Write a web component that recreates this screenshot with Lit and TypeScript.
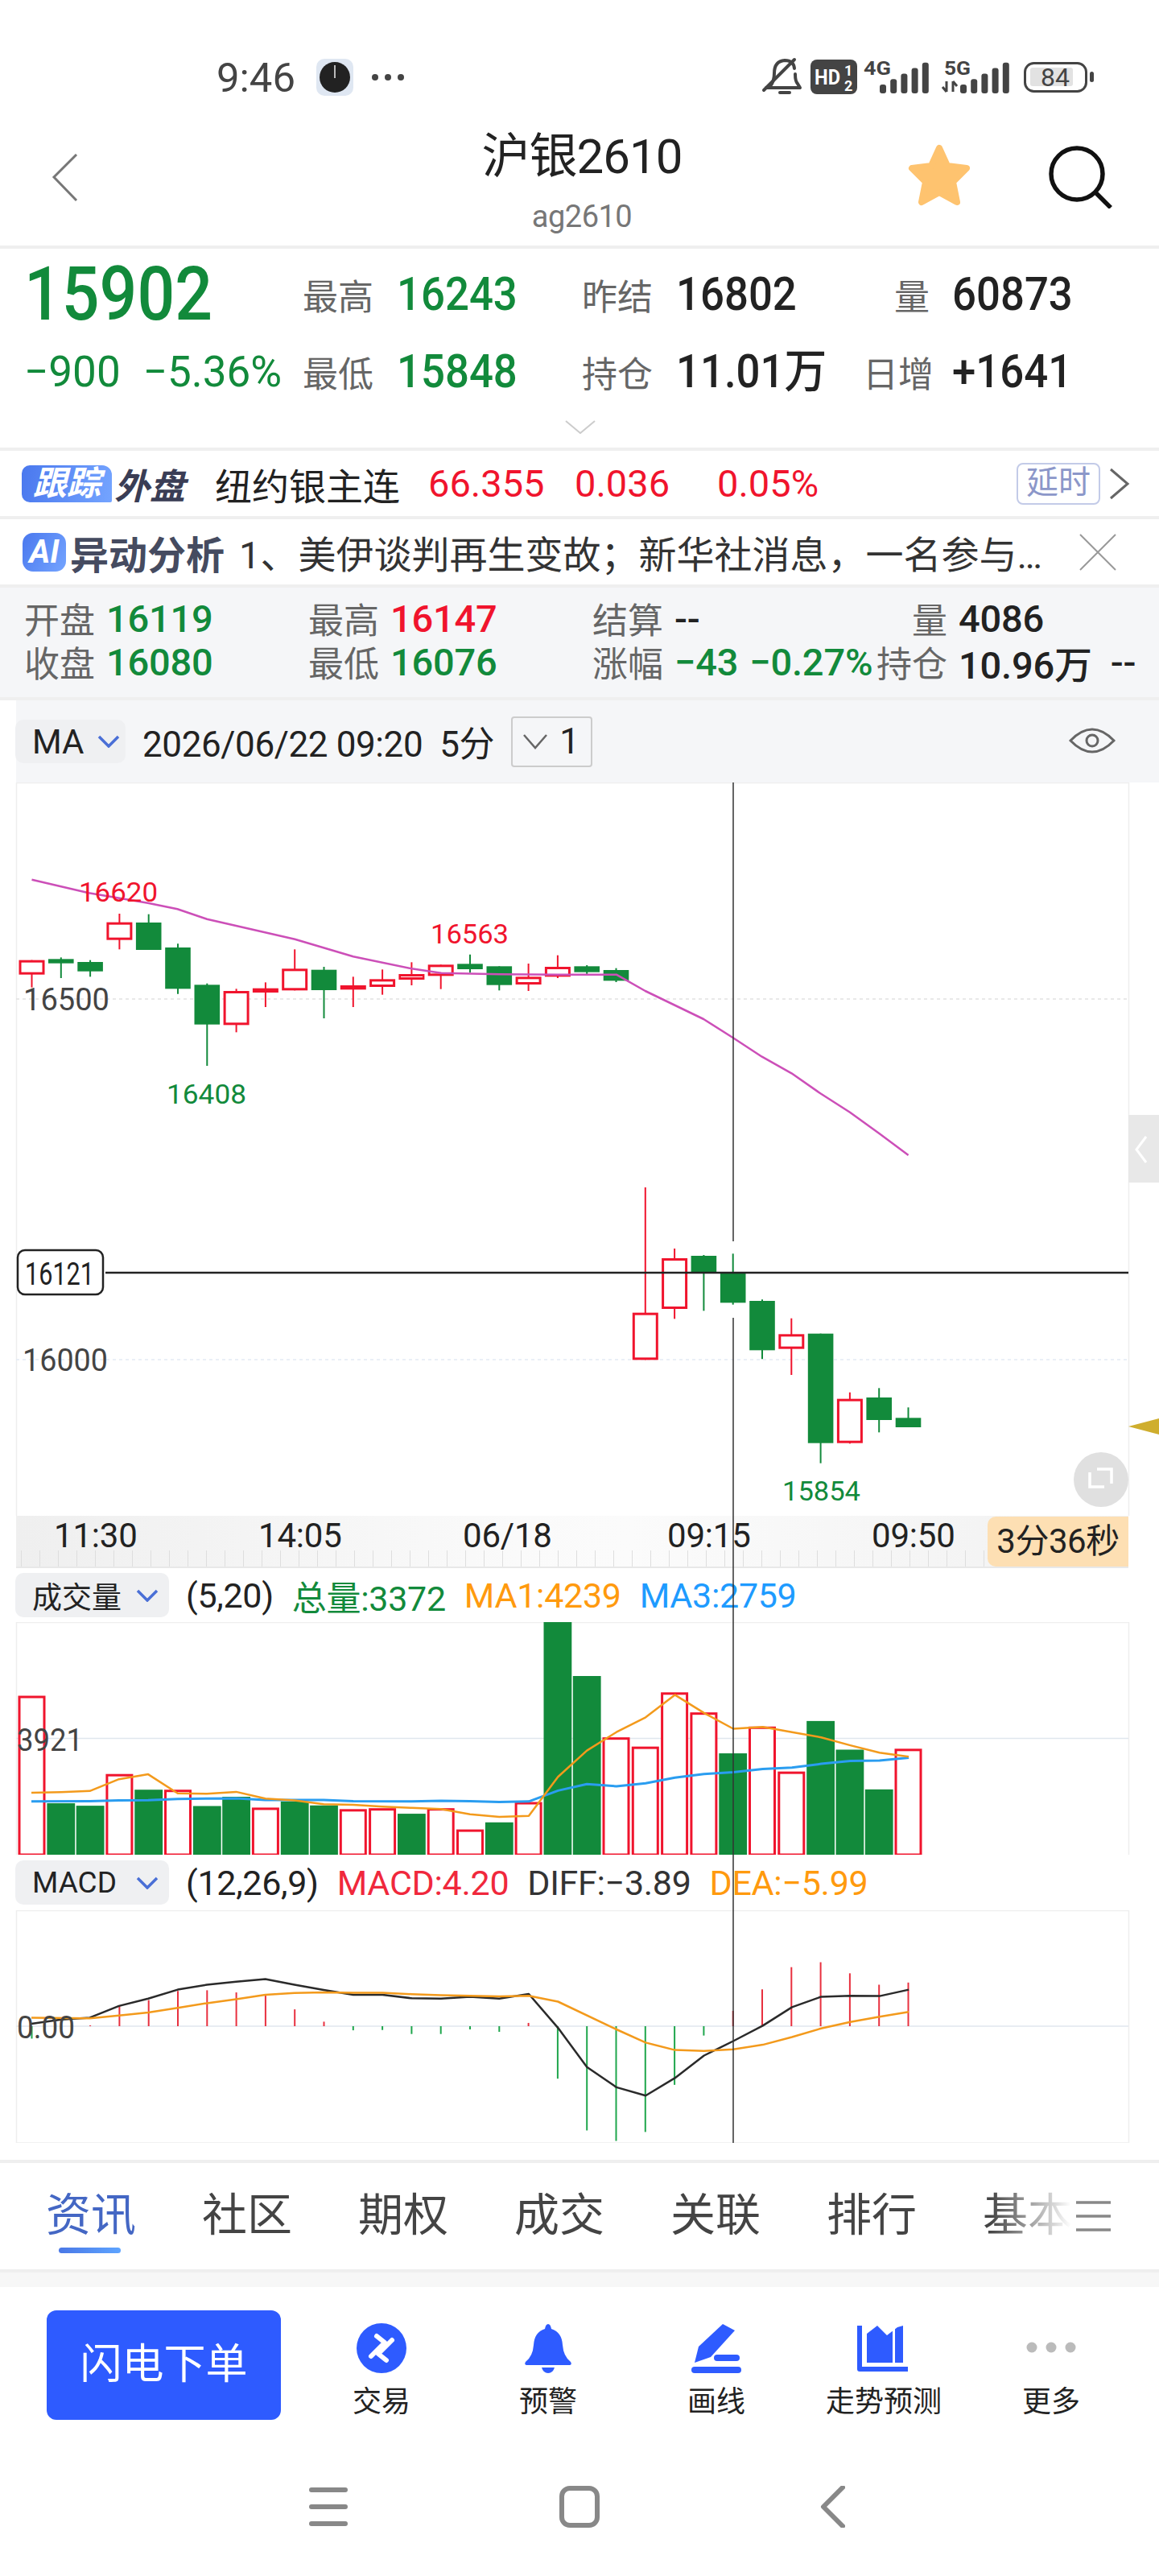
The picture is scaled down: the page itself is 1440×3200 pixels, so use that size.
import { LitElement, html, svg, css } from "lit";
import { customElement } from "lit/decorators.js";

const RED = "#f0142d";
const GREEN = "#128a3b";
const cx = (i: number) => 39.5 + 36.3 * i;

// [kind, bodyTop, bodyBottom, wickTop, wickBottom] — page y
const z3 = (v: number) => v / 3 + 1000;
const z5 = (v: number) => v / 3 + 1480;
const candles: [string, number, number, number, number][] = [
  ["r", z3(578), z3(632), z3(578), z3(680)],
  ["g", z3(574), z3(590), z3(568), z3(645)],
  ["g", z3(585), z3(620), z3(578), z3(640)],
  ["r", z3(437), z3(503), z3(405), z3(538)],
  ["g", z3(438), z3(540), z3(407), z3(540)],
  ["g", z3(531), z3(685), z3(517), z3(704)],
  ["g", z3(670), z3(818), z3(665), z3(972)],
  ["r", z3(693), z3(820), z3(685), z3(847)],
  ["r", z3(683), z3(699), z3(661), z3(753)],
  ["r", z3(610), z3(691), z3(538), z3(691)],
  ["g", z3(614), z3(690), z3(603), z3(795)],
  ["r", z3(672), z3(688), z3(640), z3(753)],
  ["r", z3(649), z3(678), z3(613), z3(707)],
  ["r", z3(630), z3(651), z3(586), z3(672)],
  ["r", z3(595), z3(637), z3(595), z3(686)],
  ["g", z3(592), z3(612), z3(557), z3(625)],
  ["g", z3(601), z3(671), z3(601), z3(691)],
  ["r", z3(640), z3(669), z3(591), z3(693)],
  ["r", z3(603), z3(640), z3(560), z3(645)],
  ["g", z3(601), z3(623), z3(597), z3(630)],
  ["g", z3(615), z3(655), z3(608), z3(660)],
  ["r", z5(452), z5(628), z3(1425), z5(628)],
  ["r", z5(249), z5(438), z5(213), z5(475)],
  ["g", z5(240), z5(302), z5(237), z5(445)],
  ["g", z5(305), z5(415), z5(232), z5(422)],
  ["g", z5(408), z5(592), z5(403), z5(625)],
  ["r", z5(532), z5(587), z5(473), z5(684)],
  ["g", z5(530), z5(938), z5(530), z5(1013)],
  ["r", z5(773), z5(938), z5(749), z5(940)],
  ["g", z5(768), z5(852), z5(733), z5(898)],
  ["g", z5(844), z5(879), z5(805), z5(879)],
];
const maPts = [[43,278],[120,328],[200,365],[240,388],[280,425],[399,500],[478,565],[557,610],[597,626],[676,631],[755,632],[834,632],[873,693],[952,798],[992,868],[1031,938],[1071,1000],[1110,1075],[1150,1145],[1190,1225],[1229,1305]]
  .map(([x, y]) => `${(x / 1.089).toFixed(1)},${z3(y).toFixed(1)}`).join(" ");

const z8 = (v: number) => v / 2.613 + 2100;
const volTops: [string, number][] = [
  ["r",17],["g",366],["g",374],["r",271],["g",322],["r",322],["g",375],["g",345],["r",380],["g",360],["g",373],["r",385],["r",382],["g",400],["r",382],["r",451],["g",428],["r",362],
  ["g",-222],["g",-47],["r",152],["r",182],["r",6],["r",71],["g",204],["r",117],["r",263],["g",99],["g",192],["g",321],["r",189],
];
const pts = (a: number[][], b: number[][]) =>
  [...a.map(([x, y]) => `${(x / 2.178).toFixed(1)},${z8(y).toFixed(1)}`),
   ...b.map(([x, y]) => `${(x / 2.178 + 720).toFixed(1)},${z8(y).toFixed(1)}`)].join(" ");
const ma1 = pts([[85,332],[165,330],[243,326],[322,288],[401,272],[481,334],[560,335],[639,329],[718,351],[797,357],[876,369],[956,371],[1035,377],[1114,381],[1193,385],[1272,402],[1351,410],[1431,407],[1510,280]],
  [[20,195],[100,135],[179,87],[258,14],[337,73],[416,124],[496,118],[575,135],[654,152],[733,178],[812,202],[891,215]]);
const ma3 = pts([[85,360],[243,359],[322,357],[401,356],[481,352],[639,350],[718,355],[876,355],[956,359],[1114,360],[1193,358],[1272,359],[1351,362],[1431,360],[1510,325]],
  [[20,304],[100,311],[179,301],[258,283],[337,271],[416,265],[496,255],[575,250],[654,238],[733,229],[812,227],[891,218]]);
const macdEnds = [1130,1100,1087,1025,1005,975,973,980,990,1035,1075,1103,1102,1115,1115,1100,1108,1079,1260,1428,1462,1433,1280,1120,1040,970,898,882,918,955,948];
const diff = pts([[85,1082],[165,1068],[243,1062],[322,1024],[401,1000],[481,971],[560,955],[639,945],[718,937],[797,955],[876,972],[956,988],[1035,988],[1114,999],[1193,1000],[1272,994],[1351,1000],[1431,985],[1510,1095]],
  [[20,1222],[100,1288],[179,1315],[258,1258],[337,1185],[416,1138],[496,1088],[575,1028],[654,994],[733,991],[812,992],[891,971]]);
const dea = pts([[85,1062],[243,1064],[322,1055],[401,1045],[481,1030],[560,1015],[639,1002],[718,988],[797,982],[876,980],[956,981],[1035,981],[1114,986],[1193,989],[1272,991],[1351,993],[1431,991],[1510,1010]],
  [[100,1100],[179,1143],[258,1167],[337,1170],[416,1165],[496,1150],[575,1125],[654,1097],[733,1076],[812,1059],[891,1043]]);

const label = (x: number, y: number, w: number, t: string, cls: string) =>
  svg`<text class=${cls} x=${x} y=${y} textLength=${w} lengthAdjust="spacingAndGlyphs">${t}</text>`;

const chev = html`<svg class="chev" viewBox="0 0 28 16"><path d="M2 2 L14 14 L26 2" fill="none" stroke="#4a6fd6" stroke-width="3.5"/></svg>`;

@customElement("app-root")
export class AppRoot extends LitElement {
  static styles = css`
    :host { display: block; width: 1440px; height: 3200px; background: #fff; overflow: hidden;
      font-family: Roboto, "Noto Sans CJK SC", sans-serif; color: #222; }
    svg { display: block; }
    .sep { height: 4px; background: #efefef; }

    .status { height: 160px; position: relative; }
    .status > svg { width: 1440px; height: 160px; }
    .s-time { font-size: 50px; fill: #444; }
    .s-b { font-weight: 700; fill: #444; font-size: 24px; }
    .s-w { font-weight: 700; fill: #fff; }
    .s-n { font-size: 31px; fill: #444; }

    .head { height: 145px; display: grid; grid-template-columns: 1fr auto 1fr; padding: 0 58px 0 64px; align-items: start; }
    .back { width: 34px; height: 60px; margin-top: 31px; }
    .title { text-align: center; }
    .title b { display: block; font-weight: 400; font-size: 60px; line-height: 70px; margin-top: 0; letter-spacing: -1px; color: #222; }
    .title i { display: block; font-style: normal; font-size: 38px; line-height: 44px; margin-top: 17px; color: #777; letter-spacing: -.5px; }
    .acts { display: flex; justify-content: flex-end; gap: 95px; padding-top: 19px; }
    .star { width: 80px; height: 80px; }
    .search { width: 80px; height: 80px; }

    .quote { height: 247px; position: relative; display: grid; padding-left: 30px; padding-top: 28px; box-sizing: border-box;
      grid-template-columns: 346px 117px 230px 117px 232px 111px 1fr; grid-template-rows: 58px 46px; row-gap: 44px; align-items: center; }
    .lab { font-size: 44px; color: #666; white-space: nowrap; }
    .val { font-size: 57px; font-weight: 500; white-space: nowrap; display: inline-block; transform: scaleX(.925); transform-origin: left; line-height: 58px; }
    .dark { color: #222; }
    .green { color: #128a3b; }
    .red { color: #f0142d; }
    .big { font-size: 92px; font-weight: 500; line-height: 92px; color: #128a3b; display: inline-block; transform: scaleX(.895); transform-origin: left; }
    .chg { font-size: 53px; color: #128a3b; white-space: nowrap; display: flex; gap: 28px; margin-left: 0; }
    .chg span { display: inline-block; }
    .right { text-align: right; padding-right: 28px; }
    .more { position: absolute; left: 702px; top: 213px; width: 38px; height: 17px; }

    .follow { height: 81px; display: flex; align-items: center; padding-left: 27px; position: relative; }
    .badge { width: 112px; height: 46px; border-radius: 10px 12px 2px 10px; background: linear-gradient(100deg, #4a78ee, #74a4ff);
      color: #fff; font-size: 42px; font-weight: 700; font-style: italic; line-height: 46px; text-align: center; white-space: nowrap; }
    .outer { font-size: 44px; font-weight: 700; font-style: italic; color: #3a3d55; margin-left: 3px; }
    .name { font-size: 46px; margin-left: 37px; color: #222; }
    .fnum { font-size: 47px; color: #f0142d; position: absolute; white-space: nowrap; }
    .f1 { left: 532px; } .f2 { left: 714px; } .f3 { left: 891px; }
    .delay { margin-left: auto; width: 104px; height: 52px; box-sizing: border-box; border: 2px solid #c3cbe8; border-radius: 8px; color: #8c97c9; font-size: 40px; line-height: 46px; text-align: center; }
    .fchev { width: 27px; height: 40px; margin: 0 36px 0 10px; }

    .ai { height: 81px; display: flex; align-items: center; padding-left: 28px; }
    .aibadge { width: 54px; height: 48px; border-radius: 13px; background: linear-gradient(120deg, #4a78ee, #74a4ff); color: #fff;
      font-size: 40px; font-weight: 700; font-style: italic; line-height: 48px; text-align: center; }
    .aititle { font-size: 48px; font-weight: 700; color: #454b60; margin-left: 5px; white-space: nowrap; }
    .aitext { font-size: 47px; margin-left: 18px; color: #333; white-space: nowrap; width: 1020px; overflow: hidden; }
    .aix { width: 46px; height: 46px; margin-left: 24px; }

    .ohlc { height: 136px; background: #f5f6f8; display: grid; padding: 11px 0 0 30px; box-sizing: border-box; grid-template-columns: 353px 353px 353px 1fr; grid-template-rows: 54px 54px; align-items: center; }
    .cell { display: flex; align-items: center; white-space: nowrap; }
    .cell .lab { width: 88px; }
    .n { font-size: 47px; font-weight: 500; margin-left: 14px; letter-spacing: -.2px; }

    .toolbar { height: 102px; margin-left: 20px; background: #f5f6f8; display: flex; align-items: center; position: relative; }
    .pill { display: flex; align-items: center; background: #eff0f2; border-radius: 10px; box-sizing: border-box; }
    .ma { width: 137px; height: 54px; margin-left: -1px; padding-left: 21px; font-size: 42px; gap: 17px; }
    .chev { width: 28px; height: 16px; flex: none; }
    .date { font-size: 44px; margin-left: 21px; white-space: nowrap; letter-spacing: -.4px; }
    .sel { margin-left: 21px; width: 101px; height: 63px; box-sizing: border-box; border: 2px solid #ccc; border-radius: 4px; display: flex; align-items: center; gap: 14px; padding-left: 12px; font-size: 44px; }
    .sel svg { width: 32px; height: 20px; }
    .eye { position: absolute; left: 1308px; top: 30px; width: 58px; height: 40px; }

    .charts { position: relative; }
    .c1 { width: 1440px; height: 911px; }
    .axis { height: 65px; width: 1382px; margin-left: 20px; box-sizing: border-box; position: relative; padding-left: 47px; display: flex; gap: 161px;
      background: linear-gradient(90deg, #efefef, #fafafa 45%, #fbfbfb 55%, #f1f1f1); border-bottom: 2px solid #e8e8e8; }
    .axis::after { content: ""; position: absolute; left: 0; right: 0; bottom: 0; height: 20px;
      background: repeating-linear-gradient(90deg, transparent 0 6px, #dedede 6px 7px, transparent 7px 23px); }
    .axis span { width: 93px; font-size: 42px; line-height: 48px; margin-top: 1px; text-align: center; white-space: nowrap; letter-spacing: -.2px; }
    .count { position: absolute; right: 0; top: 1px; width: 175px; height: 62px; background: #fddfb3; border-radius: 10px 0 0 10px; z-index: 1;
      font-size: 42px; line-height: 62px; text-align: center; color: #222; white-space: nowrap; letter-spacing: -.5px; }

    .ind { display: flex; align-items: center; margin-left: 19px; white-space: nowrap; font-size: 43px; }
    .ind.v { height: 67px; }
    .ind.m { height: 69px; }
    .ind .pill { width: 191px; height: 55px; padding-left: 21px; font-size: 37px; gap: 18px; margin-right: 21px; }
    .ind .pill span { width: 111px; white-space: nowrap; }
    .ind > span { display: inline-block; letter-spacing: -.3px; }
    .c2 { width: 1440px; height: 289px; }
    .c3 { width: 1440px; height: 289px; }
    .cross { position: absolute; left: 0; top: 0; width: 1440px; height: 1690px; pointer-events: none; }

    .ax { font-size: 38px; fill: #444; }
    .axd { font-size: 38px; fill: #222; }
    .lr { font-size: 34px; fill: #f0142d; }
    .lg { font-size: 34px; fill: #128a3b; }

    .gap { height: 21px; }
    .tabs { height: 132px; position: relative; display: flex; gap: 82px; padding: 35px 0 0 57px; box-sizing: border-box; overflow: hidden; }
    .tabs span { font-size: 56px; line-height: 60px; color: #444; white-space: nowrap; width: 112px; flex: none; }
    .tabs span.on { color: #4467c4; }
    .bar { position: absolute; left: 73px; top: 105px; width: 77px; height: 7px; border-radius: 4px; background: linear-gradient(90deg, #4a78e6, #5ea4ff); }
    .fade { position: absolute; right: 0; top: 0; width: 210px; height: 132px; background: linear-gradient(90deg, rgba(255,255,255,0), #fff 48%); }
    .burger { position: absolute; left: 1337px; top: 47px; width: 43px; height: 38px; }
    .band { height: 18px; background: #f7f7f7; }

    .actions { height: 219px; display: flex; position: relative; }
    .flash { margin: 29px 0 0 58px; width: 291px; height: 136px; background: #2e5bff; border-radius: 12px; color: #fff; font-size: 52px; line-height: 136px; text-align: center; flex: none; }
    .act { position: absolute; top: 44px; width: 180px; display: flex; flex-direction: column; align-items: center; }
    .act svg { width: 66px; height: 64px; }
    .act span { font-size: 36px; line-height: 44px; margin-top: 13px; color: #222; white-space: nowrap; }

    .nav { height: 140px; display: flex; align-items: flex-start; padding: 28px 0 0 384px; box-sizing: border-box; }
    .nav svg { height: 52px; flex: none; }
  `;

  render() {
    const wick = (c: typeof candles[0], i: number) => {
      const col = c[0] === "r" ? RED : GREEN;
      const x = cx(i);
      return svg`<line x1=${x} x2=${x} y1=${c[3]} y2=${c[4]} stroke=${col} stroke-width="2"/>`;
    };
    const body = (c: typeof candles[0], i: number) => {
      const x = cx(i);
      return c[0] === "r"
        ? svg`<rect x=${x - 14.5} y=${c[1] + 1.5} width="29" height=${c[2] - c[1] - 3} fill="#fff" stroke=${RED} stroke-width="3"/>`
        : svg`<rect x=${x - 15.8} y=${c[1]} width="31.6" height=${c[2] - c[1]} fill=${GREEN}/>`;
    };
    return html`
      <div class="status">
        <svg viewBox="0 0 1440 160">
          <text class="s-time" x="269" y="114" textLength="98" lengthAdjust="spacingAndGlyphs">9:46</text>
          <rect x="393" y="73" width="46" height="46" rx="10" fill="#dfe7f2"/>
          <circle cx="416" cy="96" r="19" fill="#222"/>
          <line x1="416" y1="81" x2="416" y2="97" stroke="#eee" stroke-width="1.5"/>
          <circle cx="466" cy="96" r="4" fill="#444"/><circle cx="482" cy="96" r="4" fill="#444"/><circle cx="498" cy="96" r="4" fill="#444"/>

          <path d="M957 107 q5-6 5-16 q0-15 13-16 q11 0 12 10 M988 92 q0 9 3 12 l3 5 H952" fill="none" stroke="#444" stroke-width="4" stroke-linejoin="round" stroke-linecap="round"/>
          <path d="M969 115 h12" stroke="#444" stroke-width="4" stroke-linecap="round"/>
          <path d="M949 112 L987 74" stroke="#444" stroke-width="4" stroke-linecap="round"/>

          <rect x="1007" y="74" width="58" height="43" rx="8" fill="#444"/>
          <text class="s-w" x="1012" y="105" font-size="26" textLength="32" lengthAdjust="spacingAndGlyphs">HD</text>
          <text class="s-w" x="1049" y="94" font-size="18">1</text>
          <text class="s-w" x="1049" y="113" font-size="18">2</text>

          <text class="s-b" x="1073" y="93" textLength="34" lengthAdjust="spacingAndGlyphs">4G</text>
          ${[0, 1, 2, 3, 4].map(i => svg`<rect x=${1093 + i * 13.2} y=${105 - i * 6.8} width="8" height=${11 + i * 6.8} rx="3" fill="#444"/>`)}
          <text class="s-b" x="1173" y="93" textLength="33" lengthAdjust="spacingAndGlyphs">5G</text>
          <path d="M1176 101 v13 M1171 108 l5 6 M1184 114 v-13 M1184 101 l5 6" stroke="#444" stroke-width="3" fill="none"/>
          ${[0, 1, 2, 3, 4].map(i => svg`<rect x=${1193 + i * 13.2} y=${105 - i * 6.8} width="8" height=${11 + i * 6.8} rx="3" fill="#444"/>`)}

          <rect x="1273.5" y="78.5" width="76" height="35" rx="11" fill="none" stroke="#444" stroke-width="3"/>
          <rect x="1280" y="84" width="53" height="23" rx="3" fill="#e2e2e2"/>
          <text class="s-n" x="1293" y="107" textLength="36" lengthAdjust="spacingAndGlyphs">84</text>
          <rect x="1354" y="89" width="5" height="13" rx="2.5" fill="#444"/>
        </svg>
      </div>

      <div class="head">
        <svg class="back" viewBox="0 0 34 60"><path d="M31 1 L3 29 L31 58" fill="none" stroke="#777" stroke-width="3"/></svg>
        <div class="title"><b>沪银2610</b><i>ag2610</i></div>
        <div class="acts">
          <svg class="star" viewBox="0 0 80 80"><path d="M40 5 L50 27 L74 30 L57 47 L62 72 L40 60 L18 72 L23 47 L6 30 L30 27 Z" fill="#fec36f" stroke="#fec36f" stroke-width="8" stroke-linejoin="round"/></svg>
          <svg class="search" viewBox="0 0 80 80"><circle cx="36" cy="37" r="32" fill="none" stroke="#111" stroke-width="5.5"/><path d="M60 61 L78 79" stroke="#111" stroke-width="5.5"/></svg>
        </div>
      </div>
      <div class="sep"></div>

      <div class="quote">
        <div><span class="big">15902</span></div>
        <span class="lab">最高</span><span class="val green">16243</span>
        <span class="lab">昨结</span><span class="val dark">16802</span>
        <span class="lab right">量</span><span class="val dark">60873</span>
        <div class="chg"><span>−900</span><span>−5.36%</span></div>
        <span class="lab">最低</span><span class="val green">15848</span>
        <span class="lab">持仓</span><span class="val dark">11.01万</span>
        <span class="lab right">日增</span><span class="val dark">+1641</span>
        <svg class="more" viewBox="0 0 38 17"><path d="M1 1 L19 16 L37 1" fill="none" stroke="#ccc" stroke-width="2"/></svg>
      </div>
      <div class="sep"></div>

      <div class="follow">
        <div class="badge">跟踪</div><div class="outer">外盘</div>
        <div class="name">纽约银主连</div>
        <span class="fnum f1">66.355</span><span class="fnum f2">0.036</span><span class="fnum f3">0.05%</span>
        <div class="delay">延时</div>
        <svg class="fchev" viewBox="0 0 27 40"><path d="M3 2 L24 20 L3 38" fill="none" stroke="#666" stroke-width="3"/></svg>
      </div>
      <div class="sep"></div>

      <div class="ai">
        <div class="aibadge">AI</div><div class="aititle">异动分析</div>
        <div class="aitext">1、美伊谈判再生变故；新华社消息，一名参与…</div>
        <svg class="aix" viewBox="0 0 46 46"><path d="M1 1 L45 45 M45 1 L1 45" stroke="#999" stroke-width="2"/></svg>
      </div>
      <div class="sep"></div>

      <div class="ohlc">
        <div class="cell"><span class="lab">开盘</span><span class="n green">16119</span></div>
        <div class="cell"><span class="lab">最高</span><span class="n red">16147</span></div>
        <div class="cell"><span class="lab">结算</span><span class="n dark">--</span></div>
        <div class="cell"><span class="lab" style="text-align:right">量</span><span class="n dark">4086</span></div>
        <div class="cell"><span class="lab">收盘</span><span class="n green">16080</span></div>
        <div class="cell"><span class="lab">最低</span><span class="n green">16076</span></div>
        <div class="cell"><span class="lab">涨幅</span><span class="n green">−43</span><span class="n green">−0.27%</span></div>
        <div class="cell"><span class="lab">持仓</span><span class="n dark">10.96万</span><span class="n dark" style="margin-left:23px">--</span></div>
      </div>
      <div class="sep"></div>

      <div class="toolbar">
        <div class="pill ma"><span>MA</span>${chev}</div>
        <div class="date">2026/06/22 09:20&nbsp; 5分</div>
        <div class="sel"><svg viewBox="0 0 32 20"><path d="M2 2 L16 18 L30 2" fill="none" stroke="#666" stroke-width="2.5"/></svg><span>1</span></div>
        <svg class="eye" viewBox="0 0 58 40"><path d="M2 20 Q29 -8 56 20 Q29 48 2 20 Z" fill="none" stroke="#666" stroke-width="3"/><circle cx="29" cy="20" r="7" fill="none" stroke="#666" stroke-width="3"/></svg>
      </div>

      <div class="charts">
        <svg class="c1" viewBox="0 972 1440 911">
          <path d="M20.5 972 V1883 M1402.5 972 V1883 M20 972.5 H1402" stroke="#eee" stroke-width="1.5" fill="none"/>
          <line x1="20" x2="1402" y1="1241" y2="1241" stroke="#e2e2e2" stroke-width="1.5" stroke-dasharray="4 4"/>
          <line x1="20" x2="1402" y1="1689" y2="1689" stroke="#e4eaf5" stroke-width="1.5" stroke-dasharray="4 4"/>
          ${candles.map(wick)}
          ${candles.map(body)}
          <polyline points=${maPts} fill="none" stroke="#cc4fb8" stroke-width="2.5" stroke-linejoin="round"/>
          ${label(98, 1120, 98, "16620", "lr")}
          ${label(535, 1172, 97, "16563", "lr")}
          ${label(207, 1371, 99, "16408", "lg")}
          ${label(972, 1864, 97, "15854", "lg")}
          ${label(29, 1255, 107, "16500", "ax")}
          ${label(28, 1703, 106, "16000", "ax")}
          <rect x="22" y="1553" width="106" height="55" rx="9" fill="#fff" stroke="#222" stroke-width="2.5"/>
          ${label(31, 1596, 86, "16121", "axd")}
          <path d="M1402 1385 H1440 V1469 H1402 Z" fill="#e8e8e8"/>
          <path d="M1424 1412 L1412 1428 L1424 1444" fill="none" stroke="#fff" stroke-width="3"/>
          <path d="M1402 1772 L1440 1762 V1782 Z" fill="#cfae2e"/>
          <circle cx="1368" cy="1838" r="34" fill="#e0e0e0"/>
          <path d="M1363 1827 H1381 V1845 M1354 1831 V1849 H1372" fill="none" stroke="#fff" stroke-width="3.5" transform="translate(0 -2)"/>
        </svg>
        <div class="axis">
          <span>11:30</span><span>14:05</span><span>06/18</span><span>09:15</span><span>09:50</span>
          <div class="count">3分36秒</div>
        </div>

        <div class="ind v">
          <div class="pill"><span>成交量</span>${chev}</div>
          <span>(5,20)</span>
          <span class="green" style="margin-left:23px">总量:3372</span>
          <span style="color:#ff9a0e;margin-left:23px">MA1:4239</span>
          <span style="color:#1e9bff;margin-left:23px">MA3:2759</span>
        </div>
        <svg class="c2" viewBox="0 2015 1440 289">
          <path d="M20.5 2304 V2015.5 H1402.5 V2304" stroke="#eee" stroke-width="1.5" fill="none"/>
          <line x1="20" x2="1402" y1="2159.5" y2="2159.5" stroke="#e0e6ee" stroke-width="1.5"/>
          ${volTops.map(([k, t], i) => {
            const y = Math.max(z8(t), 2015);
            return k === "r"
              ? svg`<rect x=${cx(i) - 15.5} y=${y + 1.5} width="31" height=${2302.5 - y} fill="#fff" stroke=${RED} stroke-width="3"/>`
              : svg`<rect x=${cx(i) - 17.4} y=${y} width="34.8" height=${2304 - y} fill=${GREEN}/>`;
          })}
          <polyline points=${ma3} fill="none" stroke="#2a9df0" stroke-width="3" stroke-linejoin="round"/>
          <polyline points=${ma1} fill="none" stroke="#f39a1c" stroke-width="2.5" stroke-linejoin="round"/>
          ${label(21, 2175, 82, "3921", "ax")}
        </svg>

        <div class="ind m">
          <div class="pill"><span>MACD</span>${chev}</div>
          <span>(12,26,9)</span>
          <span style="color:#f0283c;margin-left:23px">MACD:4.20</span>
          <span style="color:#333;margin-left:23px">DIFF:−3.89</span>
          <span style="color:#ff9a0e;margin-left:23px">DEA:−5.99</span>
        </div>
        <svg class="c3" viewBox="0 2373 1440 289">
          <path d="M20.5 2662 V2373.5 H1402.5 V2662 Z" stroke="#eee" stroke-width="1.5" fill="none"/>
          <line x1="20" x2="1402" y1="2517" y2="2517" stroke="#e0e6ee" stroke-width="1.5"/>
          ${macdEnds.map((v, i) => {
            const y = z8(v);
            const col = y < 2517 ? "#e8303f" : "#1fa64c";
            return svg`<line x1=${cx(i)} x2=${cx(i)} y1="2517" y2=${y} stroke=${col} stroke-width="2"/>`;
          })}
          <polyline points=${diff} fill="none" stroke="#2a2a2a" stroke-width="2.5" stroke-linejoin="round"/>
          <polyline points=${dea} fill="none" stroke="#f39a1c" stroke-width="2.5" stroke-linejoin="round"/>
          ${label(21, 2532, 72, "0.00", "ax")}
        </svg>

        <svg class="cross" viewBox="0 972 1440 1690">
          <path d="M911 972 V1542 M911 1637 V2662" stroke="#333" stroke-width="1.5" fill="none"/>
          <path d="M131 1581 H1402" stroke="#222" stroke-width="2.5" fill="none"/>
        </svg>
      </div>

      <div class="gap"></div>
      <div class="sep"></div>
      <div class="tabs">
        <span class="on">资讯</span><span>社区</span><span>期权</span><span>成交</span><span>关联</span><span>排行</span><span>基本</span>
        <div class="bar"></div>
        <div class="fade"></div>
        <svg class="burger" viewBox="0 0 43 38"><path d="M0 2 H43 M0 19 H43 M0 36 H43" stroke="#888" stroke-width="3.5"/></svg>
      </div>
      <div class="sep"></div>
      <div class="band"></div>

      <div class="actions">
        <div class="flash">闪电下单</div>
        <div class="act" style="left:384px">
          <svg viewBox="0 0 66 64"><circle cx="33" cy="32" r="31" fill="#2e5bff"/><path d="M27 17 L37 25 L20 42 M46 22 L29 39 L39 47" fill="none" stroke="#fff" stroke-width="6" stroke-linecap="round" stroke-linejoin="round"/></svg>
          <span>交易</span>
        </div>
        <div class="act" style="left:591px">
          <svg viewBox="0 0 66 64"><path d="M33 2 q3 0 4 6 q13 4 14 20 q1 14 10 21 q2 3-1 4 H6 q-3-1-1-4 q9-7 10-21 q1-16 14-20 q1-6 4-6 Z" fill="#2e5bff"/><path d="M25 56 h16 q-2 7-8 7 q-6 0-8-7 Z" fill="#2e5bff"/></svg>
          <span>预警</span>
        </div>
        <div class="act" style="left:800px">
          <svg viewBox="0 0 66 64"><path d="M41 2 L56 10 L26 43 L6 50 L11 30 Z" fill="#2e5bff"/><rect x="30" y="40" width="32" height="8" rx="4" fill="#2e5bff"/><rect x="2" y="55" width="62" height="8" rx="4" fill="#2e5bff"/></svg>
          <span>画线</span>
        </div>
        <div class="act" style="left:1008px">
          <svg viewBox="0 0 66 64"><path d="M3 4 V58 H63" fill="none" stroke="#2e5bff" stroke-width="6" stroke-linejoin="round"/><path d="M12 50 V14 L25 4 L37 16 L50 6 L57 4 V50 Z" fill="#2e5bff"/><rect x="44" y="4" width="3" height="46" fill="#fff"/></svg>
          <span>走势预测</span>
        </div>
        <div class="act" style="left:1216px">
          <svg viewBox="0 0 66 64"><circle cx="9" cy="31" r="6.5" fill="#bbb"/><circle cx="33" cy="31" r="6.5" fill="#bbb"/><circle cx="57" cy="31" r="6.5" fill="#bbb"/></svg>
          <span>更多</span>
        </div>
      </div>

      <div class="nav">
        <svg width="48" viewBox="0 0 48 52"><path d="M3 5 H45 M3 26 H45 M3 47 H45" stroke="#888" stroke-width="6" stroke-linecap="round"/></svg>
        <svg width="50" style="margin-left:263px" viewBox="0 0 50 52"><rect x="3" y="3" width="44" height="46" rx="10" fill="none" stroke="#888" stroke-width="6"/></svg>
        <svg width="32" style="margin-left:273px" viewBox="0 0 32 52"><path d="M29 2 L5 26 L29 50" fill="none" stroke="#888" stroke-width="6" stroke-linecap="round" stroke-linejoin="round"/></svg>
      </div>
    `;
  }
}
